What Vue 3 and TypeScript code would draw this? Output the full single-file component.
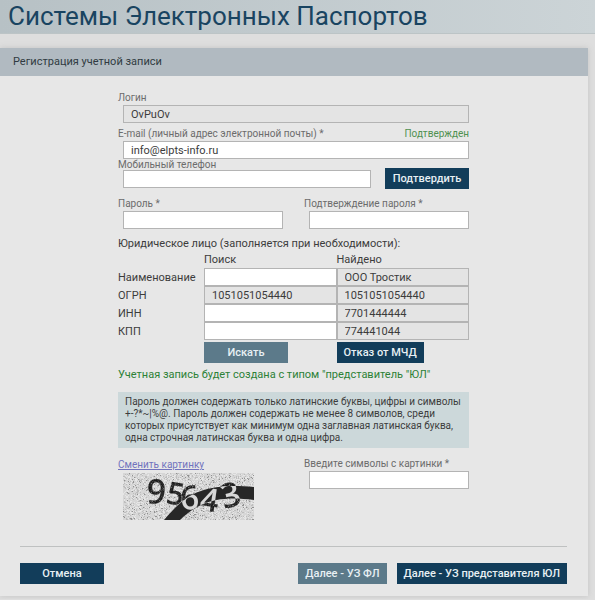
<script setup lang="ts">
import { ref } from 'vue'

interface CompanyRow {
  id: string
  label: string
  search: string
  found: string
  locked: boolean
}

const login = ref('OvPuOv')
const email = ref('info@elpts-info.ru')
const phone = ref('')
const password = ref('')
const passwordRepeat = ref('')
const captcha = ref('')

const rows = ref<CompanyRow[]>([
  { id: 'name', label: 'Наименование', search: '', found: 'ООО Тростик', locked: false },
  { id: 'ogrn', label: 'ОГРН', search: '1051051054440', found: '1051051054440', locked: true },
  { id: 'inn', label: 'ИНН', search: '', found: '7701444444', locked: false },
  { id: 'kpp', label: 'КПП', search: '', found: '774441044', locked: false }
])

const hintLines = [
  'Пароль должен содержать только латинские буквы, цифры и символы',
  '+-?*~|%@. Пароль должен содержать не менее 8 символов, среди',
  'которых присутствует как минимум одна заглавная латинская буква,',
  'одна строчная латинская буква и одна цифра.'
]

// Speckle for the captcha: a seeded generator keeps the grain stable between renders.
function speckle(seed: number, count: number): string {
  let state = seed
  const next = (limit: number): number => {
    state = (state * 1103515245 + 12345) % 2147483648
    return Math.floor((state / 2147483648) * limit)
  }
  let path = ''
  for (let i = 0; i < count; i++) {
    path += `M${next(131)} ${next(47)}h1v1h-1z`
  }
  return path
}

const darkGrain = speckle(71, 300)
const midGrain = speckle(1213, 1500)
const lightGrain = speckle(907, 1500)

const band = 'M41 47C52 34 64 22 78 18C92 13 108 12 131 14V27C116 25 104 25 93 27C78 30 66 38 57 47Z'
const digits = [
  { char: '9', x: 23, y: 30, angle: 3, size: 34 },
  { char: '5', x: 42, y: 30, angle: 10, size: 31 },
  { char: '6', x: 58, y: 37, angle: -4, size: 33 },
  { char: '4', x: 76, y: 37, angle: 8, size: 32 },
  { char: '3', x: 101, y: 36, angle: -14, size: 34 }
]
</script>

<template>
  <div class="page">
    <header class="banner"><h1>Системы Электронных Паспортов</h1></header>
    <main class="panel">
      <h2 class="panel-title">Регистрация учетной записи</h2>
      <form class="form" @submit.prevent>
        <div class="field">
          <label for="login">Логин</label>
          <input id="login" v-model="login" class="locked" readonly />
        </div>
        <div class="field email">
          <div class="label-row">
            <label for="email">E-mail (личный адрес электронной почты) *</label>
            <span class="confirmed">Подтвержден</span>
          </div>
          <input id="email" v-model="email" type="email" />
        </div>
        <div class="phone-row">
          <div class="field">
            <label for="phone">Мобильный телефон</label>
            <input id="phone" v-model="phone" type="tel" />
          </div>
          <button type="button" class="btn">Подтвердить</button>
        </div>
        <div class="pair passwords">
          <div class="field">
            <label for="password">Пароль *</label>
            <input id="password" v-model="password" type="password" />
          </div>
          <div class="field">
            <label for="repeat">Подтверждение пароля *</label>
            <input id="repeat" v-model="passwordRepeat" type="password" />
          </div>
        </div>

        <h3 class="section">Юридическое лицо (заполняется при необходимости):</h3>
        <table class="company">
          <thead>
            <tr><td></td><th scope="col">Поиск</th><th scope="col">Найдено</th></tr>
          </thead>
          <tbody>
            <tr v-for="row in rows" :key="row.id">
              <th :id="`${row.id}-label`" scope="row"><label :for="row.id">{{ row.label }}</label></th>
              <td><input :id="row.id" v-model="row.search" :class="{ locked: row.locked }" :readonly="row.locked" /></td>
              <td><input v-model="row.found" class="locked" readonly :aria-labelledby="`${row.id}-label`" /></td>
            </tr>
          </tbody>
          <tfoot>
            <tr>
              <td></td>
              <td><button type="button" class="btn muted">Искать</button></td>
              <td><button type="button" class="btn">Отказ от МЧД</button></td>
            </tr>
          </tfoot>
        </table>

        <p class="account-type">Учетная запись будет создана с типом "представитель "ЮЛ"</p>
        <p class="hint"><span v-for="line in hintLines" :key="line">{{ line }}</span></p>

        <div class="pair">
          <div class="picture">
            <a href="#">Сменить картинку</a>
            <svg width="131" height="47" viewBox="0 0 131 47">
              <rect width="131" height="47" fill="#d6d6d6" />
              <path :d="midGrain" fill="#bdbdbd" />
              <path :d="lightGrain" fill="#e6e6e6" />
              <path :d="darkGrain" fill="#919191" />
              <path :d="band" fill="#272727" />
              <text v-for="d in digits" :key="d.char" class="digit" :x="d.x" :y="d.y" :font-size="d.size" :transform="`rotate(${d.angle} ${d.x} ${d.y})`">{{ d.char }}</text>
            </svg>
          </div>
          <div class="field">
            <label for="captcha">Введите символы с картинки *</label>
            <input id="captcha" v-model="captcha" />
          </div>
        </div>
      </form>
      <footer class="actions">
        <button type="button" class="btn">Отмена</button>
        <button type="button" class="btn muted next">Далее - УЗ ФЛ</button>
        <button type="button" class="btn">Далее - УЗ представителя ЮЛ</button>
      </footer>
    </main>
  </div>
</template>

<style>
body {
  margin: 0;
  background: #dedede;
}
</style>

<style scoped>
* {
  box-sizing: border-box;
}
.page {
  font-family: Roboto, 'Noto Sans', sans-serif;
  font-size: 11px;
  line-height: 14px;
  color: #3c3c3c;
  padding-bottom: 3px;
}
h1, h2, h3, p {
  margin: 0;
  font-weight: 400;
}
.banner {
  padding: 0 8px;
  background: linear-gradient(90deg, #b7c1c5, #ccd4d7);
  border-bottom: 1px solid #bcc4c6;
}
.banner h1 {
  font-size: 26px;
  line-height: 33px;
  color: #194461;
  white-space: nowrap;
}
.panel {
  margin: 14px 7px 0 0;
  background: #e7e7e7;
  box-shadow: 0 0 6px #c4c4c4;
}
.panel-title {
  padding: 0 13px;
  font-size: 11px;
  line-height: 28px;
  background: #b1bac1;
  color: #303a42;
}
.form {
  max-width: 352px;
  margin: 0 auto;
  padding: 15px 1px 0 0;
}
.field {
  display: flex;
  flex-direction: column;
}
.field label, .confirmed {
  font-size: 10px;
  line-height: 14px;
  color: #6c6c6c;
  white-space: nowrap;
}
.field input {
  margin-left: 5px;
}
input {
  display: block;
  min-width: 0;
  height: 18px;
  padding: 0 7px;
  border: 1px solid #b4b4b4;
  border-radius: 0;
  background: #fff;
  font: inherit;
  color: #3c3c3c;
}
input.locked {
  background: #e4e4e4;
}
.email {
  margin-top: 4px;
}
.label-row {
  display: flex;
  justify-content: space-between;
}
.label-row .confirmed {
  color: #4f9150;
}
.phone-row {
  display: flex;
  align-items: flex-end;
  gap: 14px;
}
.phone-row .field {
  flex: 1;
}
.phone-row label {
  line-height: 11px;
}
.phone-row .btn {
  margin-bottom: -1px;
}
.btn {
  min-width: 84px;
  height: 21px;
  padding: 0 7px;
  border: 0;
  background: #123d5a;
  color: #e8f0f4;
  font: 500 11px/21px Roboto, 'Noto Sans', sans-serif;
  white-space: nowrap;
}
.btn.muted {
  background: #5c7a8a;
}
.pair {
  display: grid;
  grid-template-columns: 165px 165px;
  justify-content: space-between;
}
.passwords {
  margin-top: 9px;
}
.section {
  margin-top: 7px;
  font-size: 11px;
  line-height: 16px;
}
.company {
  width: 100%;
  border-collapse: collapse;
  table-layout: fixed;
}
.company th, .company td {
  padding: 0;
  font-weight: 400;
  text-align: left;
}
.company tr > :first-child {
  width: 86px;
}
.company thead th {
  line-height: 16px;
}
.company tbody th {
  padding-top: 2px;
  line-height: 16px;
}
.company input {
  width: 100%;
}
.company .btn {
  display: block;
  margin-top: 2px;
}
.account-type {
  margin-top: 4px;
  line-height: 16px;
  font-size: 11px;
  color: #2c8136;
}
.hint {
  margin-top: 9px;
  padding: 4px 2px 4px 7px;
  font-size: 10px;
  line-height: 12px;
  background: #ccd8da;
}
.hint span {
  display: block;
}
.hint + .pair {
  margin-top: 9px;
}
.picture a {
  display: block;
  line-height: 16px;
  font-size: 10px;
  color: #7173bd;
}
.picture svg {
  display: block;
  margin-left: 5px;
  isolation: isolate;
}
.digit {
  font-family: 'Open Sans', sans-serif;
  font-weight: 600;
  fill: #fff;
  mix-blend-mode: difference;
}
.actions {
  display: flex;
  gap: 10px;
  margin: 26px 21px 0 20px;
  padding: 16px 0 12px;
  border-top: 1px solid #bfc1c1;
}
.next {
  margin-left: auto;
}
</style>
